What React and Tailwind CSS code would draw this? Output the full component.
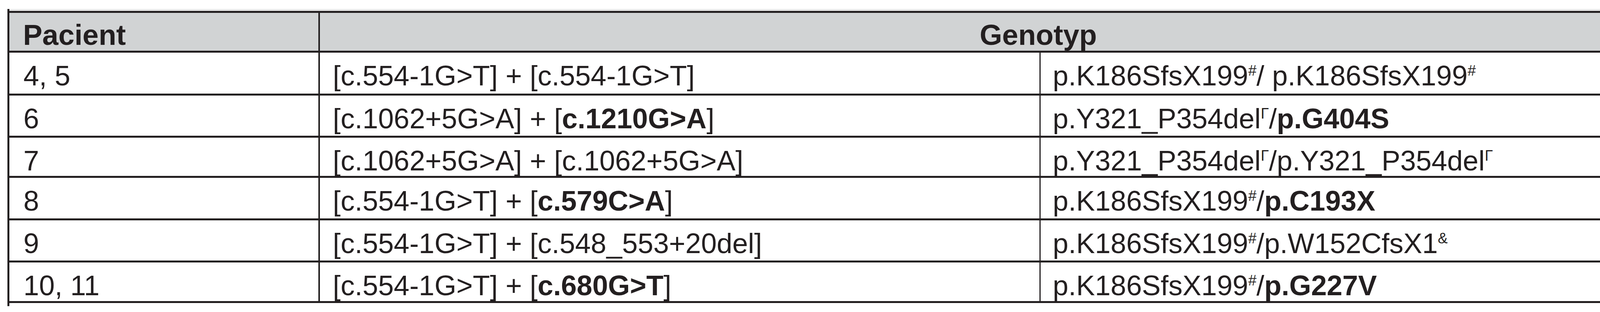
import React from "react";

const Sup = ({ children }) => (
  <sup className="text-[38px] top-[-0.65em]">{children}</sup>
);

const rows = [
  {
    id: "4, 5",
    h: "h-[105px]",
    c: <>[c.554-1G&gt;T] + [c.554-1G&gt;T]</>,
    p: <>p.K186SfsX199<Sup>#</Sup>/ p.K186SfsX199<Sup>#</Sup></>,
  },
  {
    id: "6",
    h: "h-[103px]",
    c: <>[c.1062+5G&gt;A] + [<b>c.1210G&gt;A</b>]</>,
    p: <>p.Y321_P354del<Sup>Γ</Sup>/<b>p.G404S</b></>,
  },
  {
    id: "7",
    h: "h-[98px]",
    c: <>[c.1062+5G&gt;A] + [c.1062+5G&gt;A]</>,
    p: <>p.Y321_P354del<Sup>Γ</Sup>/p.Y321_P354del<Sup>Γ</Sup></>,
  },
  {
    id: "8",
    h: "h-[104px]",
    c: <>[c.554-1G&gt;T] + [<b>c.579C&gt;A</b>]</>,
    p: <>p.K186SfsX199<Sup>#</Sup>/<b>p.C193X</b></>,
  },
  {
    id: "9",
    h: "h-[103px]",
    c: <>[c.554-1G&gt;T] + [c.548_553+20del]</>,
    p: <>p.K186SfsX199<Sup>#</Sup>/p.W152CfsX1<Sup>&amp;</Sup></>,
  },
  {
    id: "10, 11",
    h: "h-[99px]",
    c: <>[c.554-1G&gt;T] + [<b>c.680G&gt;T</b>]</>,
    p: <>p.K186SfsX199<Sup>#</Sup>/<b>p.G227V</b></>,
  },
];

export default function App() {
  return (
    <div className="w-full h-[800px] overflow-hidden bg-white pt-[23px] pl-[19px] font-['Liberation_Sans',Arial,sans-serif] text-[#231f20]">
      <div className="w-[4491px] border-x-[5px] border-[#231f20] pb-[8px]">
        <div className="h-[5px] bg-[#e9e9e9]" />

        {/* header */}
        <div className="flex h-[107px] border-y-[5px] border-[#231f20] bg-[#d1d3d4] text-[74px] font-bold">
          <div className="w-[795px] shrink-0 border-r-[4px] border-[#231f20] pl-[35px] pt-[1px]">
            Pacient
          </div>
          <div className="flex-1 text-center pt-[1px] pr-[8px]">Genotyp</div>
        </div>

        {rows.map((r) => (
          <div
            key={r.id}
            className={`flex ${r.h} box-content border-b-[5px] border-[#231f20] text-[72px] whitespace-nowrap`}
          >
            <div className="w-[795px] shrink-0 border-r-[4px] border-[#231f20] pl-[36px] pt-[5px]">
              {r.id}
            </div>
            <div className="w-[1845px] shrink-0 border-r-[3px] border-[#231f20] pl-[33px] pt-[5px]">
              {r.c}
            </div>
            <div className="flex-1 pl-[31px] pt-[5px]">{r.p}</div>
          </div>
        ))}
      </div>
    </div>
  );
}
